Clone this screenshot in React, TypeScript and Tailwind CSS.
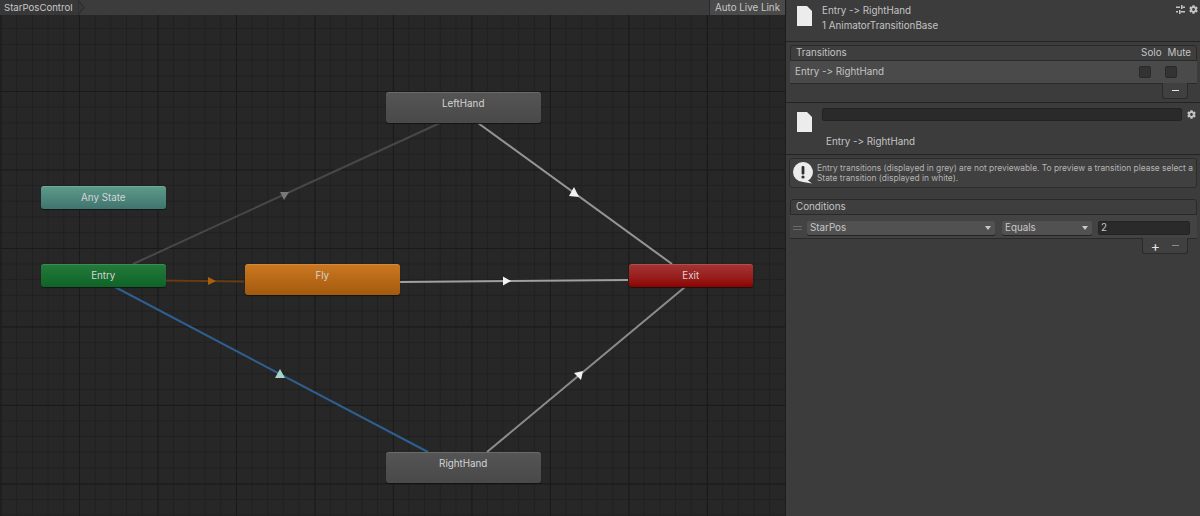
import { FaCog } from 'react-icons/fa';

type NodeProps = {
  label: string;
  className: string;
};

function StateNode({ label, className }: NodeProps) {
  return (
    <div
      className={`absolute flex justify-center rounded-[3px] pt-[6px] text-[9.800px] leading-[11px] text-[#d4d4d4] shadow-[0_1px_1px_#151515,inset_0_1px_0_#ffffff22] ${className}`}
    >
      {label}
    </div>
  );
}

function GraphLines() {
  return (
    <svg className="absolute inset-0 h-full w-full" viewBox="0 0 785 501">
      <g strokeWidth="2" fill="none">
        <line x1="133" y1="249" x2="440" y2="108" stroke="#484848" />
        <line x1="478" y1="108" x2="672" y2="249" stroke="#959595" />
        <line x1="400" y1="267" x2="628" y2="265" stroke="#a0a0a0" />
        <line x1="487" y1="437" x2="685" y2="272" stroke="#8c8c8c" />
        <line x1="115" y1="272" x2="428" y2="437" stroke="#2f5f90" />
        <line x1="165" y1="265.500" x2="244" y2="266.500" stroke="#663c12" />
      </g>
      <polygon points="280,177 289,177 284,185" fill="#7a7a7a" />
      <polygon points="574,172 579,182 569,181" fill="#f2f2f2" />
      <polygon points="511,266 503,261.500 503,270.500" fill="#f2f2f2" />
      <polygon points="583,356 581,365 574,358" fill="#f2f2f2" />
      <polygon points="280,354 285,363 275,363" fill="#a6d5c8" />
      <polygon points="216,266 208,262 208,270" fill="#a9600f" />
    </svg>
  );
}

function DocIcon() {
  return (
    <svg width="15" height="20" viewBox="0 0 15 20">
      <path d="M0 0H10L15 5V20H0Z" fill="#ececec" />
    </svg>
  );
}

function SlidersIcon() {
  return (
    <svg width="9" height="9" viewBox="0 0 9 9" fill="#c4c4c4">
      <rect x="0" y="1.500" width="4" height="1.500" />
      <rect x="5" y="0" width="1.500" height="4" />
      <rect x="6.500" y="1.500" width="2.500" height="1.500" />
      <rect x="0" y="6" width="2" height="1.500" />
      <rect x="3" y="5" width="1.500" height="4" />
      <rect x="4.500" y="6" width="4.500" height="1.500" />
    </svg>
  );
}

function HelpIcon() {
  return (
    <svg width="20" height="22" viewBox="0 0 20 22" className="shrink-0">
      <path d="M10 0a10 10 0 0 1 5 18.600L19 21.500 10 20a10 10 0 0 1 0-20Z" fill="#ececec" />
      <rect x="8.600" y="4" width="2.800" height="8.500" rx="1" fill="#303030" />
      <circle cx="10" cy="15" r="1.600" fill="#303030" />
    </svg>
  );
}

function Dropdown({ label, className }: { label: string; className: string }) {
  return (
    <div
      className={`flex h-[14px] items-center justify-between rounded-[2px] bg-[#515151] pl-[3px] pr-[4px] text-[#c8c8c8] shadow-[0_1px_0_#222] ${className}`}
    >
      <span>{label}</span>
      <span className="h-0 w-0 border-x-[3.500px] border-t-[4px] border-x-transparent border-t-[#c8c8c8]" />
    </div>
  );
}

export default function App() {
  return (
    <div className="flex h-[516px] w-[1200px] overflow-hidden bg-[#3c3c3c] font-['Inter',sans-serif] text-[#c4c4c4] [font-variant-ligatures:none]">
      {/* Graph side */}
      <div className="flex w-[786px] shrink-0 flex-col border-r border-[#1e1e1e]">
        <div className="flex h-[15px] shrink-0 items-stretch justify-between bg-[#3c3c3c] shadow-[0_1px_2px_#1c1c1c]">
          <div className="relative flex items-center bg-[#383838] pl-[4px] pr-[6px] text-[9.600px] leading-none text-[#c8c8c8]">
            StarPosControl
            <svg className="absolute left-full top-0" width="8" height="15" viewBox="0 0 8 15">
              <path d="M0 0L6 7.500 0 15Z" fill="#383838" stroke="#2a2a2a" />
            </svg>
          </div>
          <div className="flex w-[76px] items-center justify-center border-l border-[#2a2a2a] bg-[#4a4a4a] text-[9.800px] leading-none text-[#c8c8c8]">
            Auto Live Link
          </div>
        </div>
        <div className="relative flex-1 bg-[#272727] [background-image:linear-gradient(to_right,#1a1a1a_1px,transparent_1px),linear-gradient(to_bottom,#1a1a1a_1px,transparent_1px),linear-gradient(to_right,#202020_1px,transparent_1px),linear-gradient(to_bottom,#202020_1px,transparent_1px)] [background-position:0.500px_-2.500px,0.500px_-2.500px,0.500px_-2.500px,0.500px_-2.500px] [background-size:78.500px_78.500px,78.500px_78.500px,15.700px_15.700px,15.700px_15.700px]">
          <GraphLines />
          <StateNode label="LeftHand" className="left-[385.500px] top-[77px] h-[31px] w-[155.500px] bg-gradient-to-b from-[#555555] to-[#494949]" />
          <StateNode label="Any State" className="left-[41px] top-[171px] h-[23px] w-[124.500px] bg-gradient-to-b from-[#5d9c8b] to-[#40746f]" />
          <StateNode label="Entry" className="left-[41px] top-[249px] h-[23px] w-[124.500px] bg-gradient-to-b from-[#237b3c] to-[#0e6426]" />
          <StateNode label="Fly" className="left-[244.500px] top-[249px] h-[31px] w-[155.500px] bg-gradient-to-b from-[#cc7820] to-[#a35a0e]" />
          <StateNode label="Exit" className="left-[628.500px] top-[249px] h-[23px] w-[124.500px] bg-gradient-to-b from-[#a53535] to-[#8d0000]" />
          <StateNode label="RightHand" className="left-[385.500px] top-[437px] h-[31px] w-[155.500px] bg-gradient-to-b from-[#555555] to-[#494949]" />
        </div>
      </div>

      {/* Inspector */}
      <div className="flex min-w-0 flex-1 flex-col text-[9.800px] leading-none">
        <div className="relative flex h-[42px] shrink-0 border-b border-[#242424] pl-[11px] pt-[6px]">
          <DocIcon />
          <div className="ml-[10px] flex flex-col gap-[4px]">
            <span className="mt-[-1px] leading-[11px]">Entry -&gt; RightHand</span>
            <span className="leading-[11px]">1 AnimatorTransitionBase</span>
          </div>
          <div className="absolute right-[2px] top-[5px] flex items-center gap-[4px] text-[#c4c4c4]">
            <SlidersIcon />
            <FaCog className="h-[9px] w-[9px]" />
          </div>
        </div>

        <div className="flex h-[61px] shrink-0 flex-col border-b border-[#242424] pl-[4px] pr-[3px] pt-[3px]">
          <div className="flex h-[16px] shrink-0 items-center justify-between rounded-t-[3px] border border-[#2a2a2a] bg-[#3e3e3e] pl-[5px] pr-[5px]">
            <span>Transitions</span>
            <div className="flex gap-[6px]">
              <span>Solo</span>
              <span>Mute</span>
            </div>
          </div>
          <div className="flex h-[22px] shrink-0 items-center bg-[#4a4a4a] pl-[5px] shadow-[0_1px_0_#2a2a2a]">
            <span className="flex-1">Entry -&gt; RightHand</span>
            <span className="h-[12px] w-[12px] rounded-[2px] border border-[#2a2a2a] bg-[#333333]" />
            <span className="ml-[14px] mr-[20px] h-[12px] w-[12px] rounded-[2px] border border-[#2a2a2a] bg-[#333333]" />
          </div>
          <div className="ml-auto mr-[9px] flex h-[16px] w-[26px] shrink-0 items-center justify-center rounded-b-[3px] border border-t-0 border-[#2a2a2a] bg-[#404040]">
            <span className="h-[1.500px] w-[7px] bg-[#e4e4e4]" />
          </div>
        </div>

        <div className="relative flex h-[52px] shrink-0 border-b border-[#242424] pl-[11px] pt-[9px]">
          <DocIcon />
          <div className="ml-[10px] flex-1">
            <div className="mr-[18px] mt-[-4px] h-[13px] rounded-[2px] border border-[#232323] bg-[#2a2a2a]" />
            <div className="ml-[4px] mt-[16px]">Entry -&gt; RightHand</div>
          </div>
          <FaCog className="absolute right-[4px] top-[7px] h-[9px] w-[9px]" />
        </div>

        <div className="ml-[3px] mr-[3px] mt-[3px] flex h-[30px] shrink-0 items-center gap-[4px] rounded-[3px] border border-[#2c2c2c] bg-[#404040] pl-[3px]">
          <HelpIcon />
          <p className="text-[8.400px] leading-[10px] text-[#b4b4b4]">
            Entry transitions (displayed in grey) are not previewable. To preview a transition please select a State transition (displayed in white).
          </p>
        </div>

        <div className="ml-[4px] mr-[3px] mt-[11px] flex h-[16px] shrink-0 items-center rounded-t-[3px] border border-[#2a2a2a] bg-[#3e3e3e] pl-[5px]">
          Conditions
        </div>
        <div className="ml-[4px] mr-[3px] flex h-[23px] shrink-0 items-center bg-[#434343] pl-[3px] pt-[2px] shadow-[0_1px_0_#2a2a2a]">
          <div className="mr-[5px] flex w-[9px] flex-col gap-[2px]">
            <span className="h-px bg-[#6a6a6a]" />
            <span className="h-px bg-[#6a6a6a]" />
          </div>
          <Dropdown label="StarPos" className="mr-[7px] w-[188px]" />
          <Dropdown label="Equals" className="mr-[6px] w-[90px]" />
          <div className="flex h-[14px] w-[92px] items-center rounded-[2px] border border-[#232323] bg-[#2a2a2a] pl-[2px]">
            2
          </div>
        </div>
        <div className="ml-auto mr-[12px] flex h-[16px] w-[46px] shrink-0 items-center justify-center gap-[12px] rounded-b-[3px] border border-t-0 border-[#2a2a2a] bg-[#404040]">
          <span className="text-[14px] leading-none text-[#e8e8e8]">+</span>
          <span className="h-[1.500px] w-[7px] bg-[#8c8c8c]" />
        </div>
      </div>
    </div>
  );
}
